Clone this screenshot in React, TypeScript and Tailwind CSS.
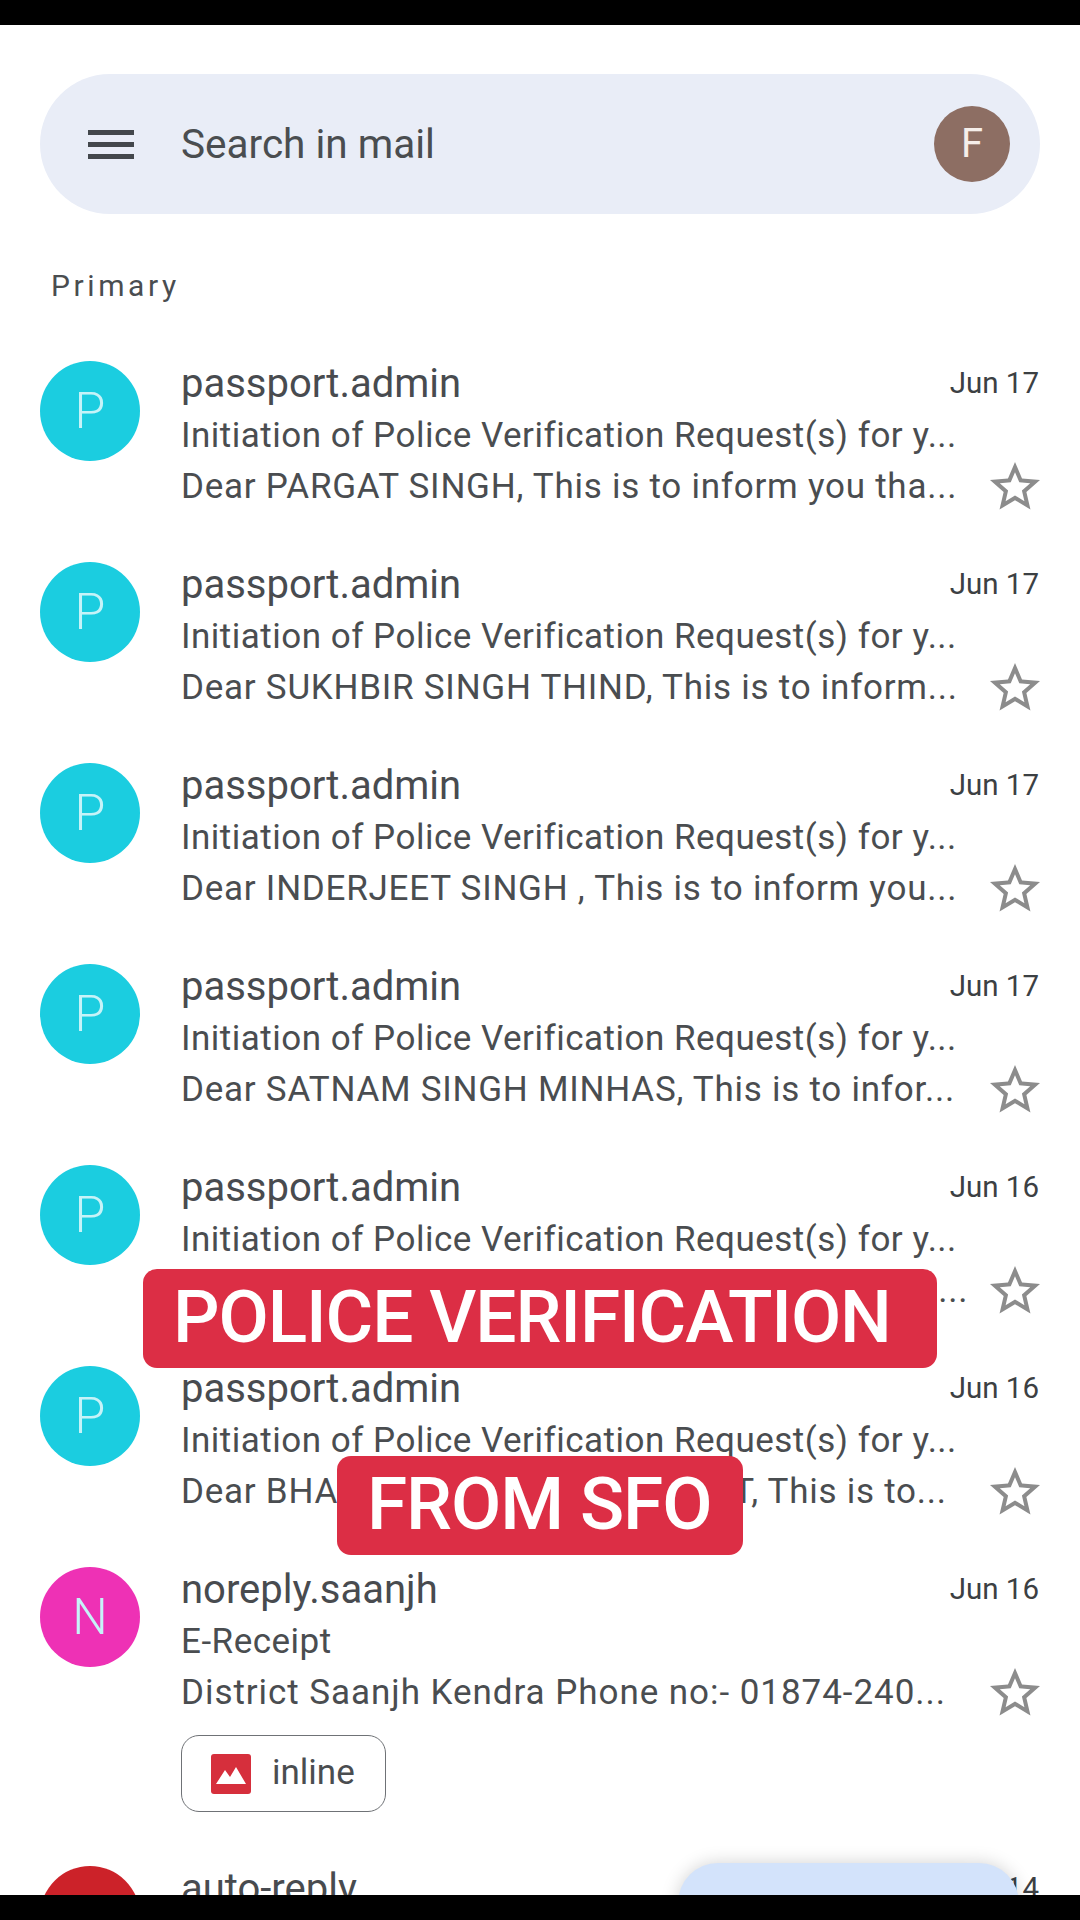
const font = "font-['Roboto',sans-serif]";

type Mail = {
  letter: string;
  color: string;
  name: string;
  date: string;
  subject: string;
  snippet: string;
  chip?: boolean;
};

const mails: Mail[] = [
  { letter: "P", color: "bg-[#1bcde0]", name: "passport.admin", date: "Jun 17", subject: "Initiation of Police Verification Request(s) for y...", snippet: "Dear PARGAT SINGH, This is to inform you tha..." },
  { letter: "P", color: "bg-[#1bcde0]", name: "passport.admin", date: "Jun 17", subject: "Initiation of Police Verification Request(s) for y...", snippet: "Dear SUKHBIR SINGH THIND, This is to inform..." },
  { letter: "P", color: "bg-[#1bcde0]", name: "passport.admin", date: "Jun 17", subject: "Initiation of Police Verification Request(s) for y...", snippet: "Dear INDERJEET SINGH , This is to inform you..." },
  { letter: "P", color: "bg-[#1bcde0]", name: "passport.admin", date: "Jun 17", subject: "Initiation of Police Verification Request(s) for y...", snippet: "Dear SATNAM SINGH MINHAS, This is to infor..." },
  { letter: "P", color: "bg-[#1bcde0]", name: "passport.admin", date: "Jun 16", subject: "Initiation of Police Verification Request(s) for y...", snippet: "Dear HARMINDER SINGH, This is to inform you..." },
  { letter: "P", color: "bg-[#1bcde0]", name: "passport.admin", date: "Jun 16", subject: "Initiation of Police Verification Request(s) for y...", snippet: "Dear BHAGWANT SINGH GURMEET, This is to..." },
  { letter: "N", color: "bg-[#ee31b5]", name: "noreply.saanjh", date: "Jun 16", subject: "E-Receipt", snippet: "District Saanjh Kendra Phone no:- 01874-240...", chip: true },
];

function Star() {
  return (
    <svg viewBox="0 0 24 24" className="h-[60px] w-[60px] fill-[#8c8c8c]">
      <path d="M22 9.24l-7.19-.62L12 2 9.19 8.63 2 9.24l5.46 4.73L5.82 21 12 17.27 18.18 21l-1.63-7.03L22 9.24zM12 15.4l-3.76 2.27 1-4.28-3.32-2.88 4.38-.38L12 6.1l1.71 4.04 4.38.38-3.32 2.88 1 4.28L12 15.4z" />
    </svg>
  );
}

function Row({ mail }: { mail: Mail }) {
  return (
    <div className={`flex items-start px-10 ${mail.chip ? "h-[299px]" : "h-[201px]"}`}>
      <div className={`flex h-[100px] w-[100px] shrink-0 items-center justify-center rounded-full text-[50px] font-light text-[#c6f3f8] ${mail.color}`}>
        {mail.letter}
      </div>
      <div className="-mt-[3px] ml-[41px] min-w-0 flex-1">
        <div className="flex h-[52px] items-center justify-between">
          <span className="text-[40px] text-[#484b4f]">{mail.name}</span>
          <span className="mb-[2px] mr-px text-[29.5px] text-[#3c4043]">{mail.date}</span>
        </div>
        <div className="flex h-[52px] items-center text-[35px] tracking-[0.5px] whitespace-nowrap text-[#4a4d50]">{mail.subject}</div>
        <div className={`flex h-[51px] items-center justify-between whitespace-nowrap text-[35px] text-[#4a4d50] ${mail.chip ? "tracking-[0.95px]" : "tracking-[0.75px]"}`}>
          <span>{mail.snippet}</span>
          <span className="-mr-[5px] mb-[2px] shrink-0">
            <Star />
          </span>
        </div>
        {mail.chip && (
          <div className="mt-[16px] flex h-[77px] w-[205px] items-center rounded-[18px] border border-[#6f7276] pl-[29px]">
            <svg viewBox="0 0 40 40" className="h-10 w-10">
              <rect width="40" height="40" rx="3" fill="#d62f3c" />
              <path d="M5 30 L14 16 L19 23 L25 13 L35 30 Z" fill="#fff" />
            </svg>
            <span className="ml-[21px] text-[35px] text-[#4a4d50]">inline</span>
          </div>
        )}
      </div>
    </div>
  );
}

export default function App() {
  return (
    <div className={`relative h-[1920px] w-[1080px] overflow-hidden bg-white ${font}`}>
      <div className="h-[25px] bg-black" />

      {/* Search bar */}
      <div className="mx-10 mt-[49px] flex h-[140px] items-center rounded-[70px] bg-[#e9edf7] pl-[48px] pr-[30px]">
        <div className="flex w-[46px] flex-col gap-[7px]">
          <div className="h-[5px] bg-[#43474c]" />
          <div className="h-[5px] bg-[#43474c]" />
          <div className="h-[5px] bg-[#43474c]" />
        </div>
        <span className="ml-[47px] flex-1 text-[40.5px] text-[#4a4d50]">Search in mail</span>
        <div className="flex h-[76px] w-[76px] items-center justify-center rounded-full bg-[#8d6e63] text-[40px] text-[#f5eeea]">F</div>
      </div>

      <div className="ml-[51px] mt-[54px] text-[30px] leading-[36px] tracking-[3.6px] text-[#4a4d50]">Primary</div>

      <div className="mt-[57px]">
        {mails.map((m, i) => (
          <Row key={i} mail={m} />
        ))}
        <div className="flex items-start px-10">
          <div className="flex h-[100px] w-[100px] shrink-0 items-center justify-center rounded-full bg-[#cc2229] text-[50px] font-light text-[#f8d5d6]">A</div>
          <div className="-mt-[3px] ml-[41px] flex h-[52px] flex-1 items-center justify-between">
            <span className="text-[40px] text-[#484b4f]">auto-reply</span>
            <span className="mb-[2px] mr-px text-[29.5px] text-[#3c4043]">Jun 14</span>
          </div>
        </div>
      </div>

      {/* Compose button, cut off by the bottom bar */}
      <div className="absolute left-[678px] top-[1863px] h-[120px] w-[341px] rounded-[40px] bg-[#d3e3fb] shadow-[0_0_18px_rgba(0,0,0,0.18)]" />

      {/* Video captions */}
      <div className="absolute left-[143px] top-[1269px] flex h-[99px] w-[794px] items-center rounded-[14px] bg-[#dc2e45] pb-[2px] pl-[30px] text-[73px] font-medium tracking-[-1.1px] text-white">
        POLICE VERIFICATION
      </div>
      <div className="absolute left-[337px] top-[1456px] flex h-[99px] w-[406px] items-center rounded-[14px] bg-[#dc2e45] pb-[2px] pl-[30px] text-[73px] font-medium tracking-[-1.1px] text-white">
        FROM SFO
      </div>

      <div className="absolute bottom-0 left-0 h-[25px] w-full bg-black" />
    </div>
  );
}
